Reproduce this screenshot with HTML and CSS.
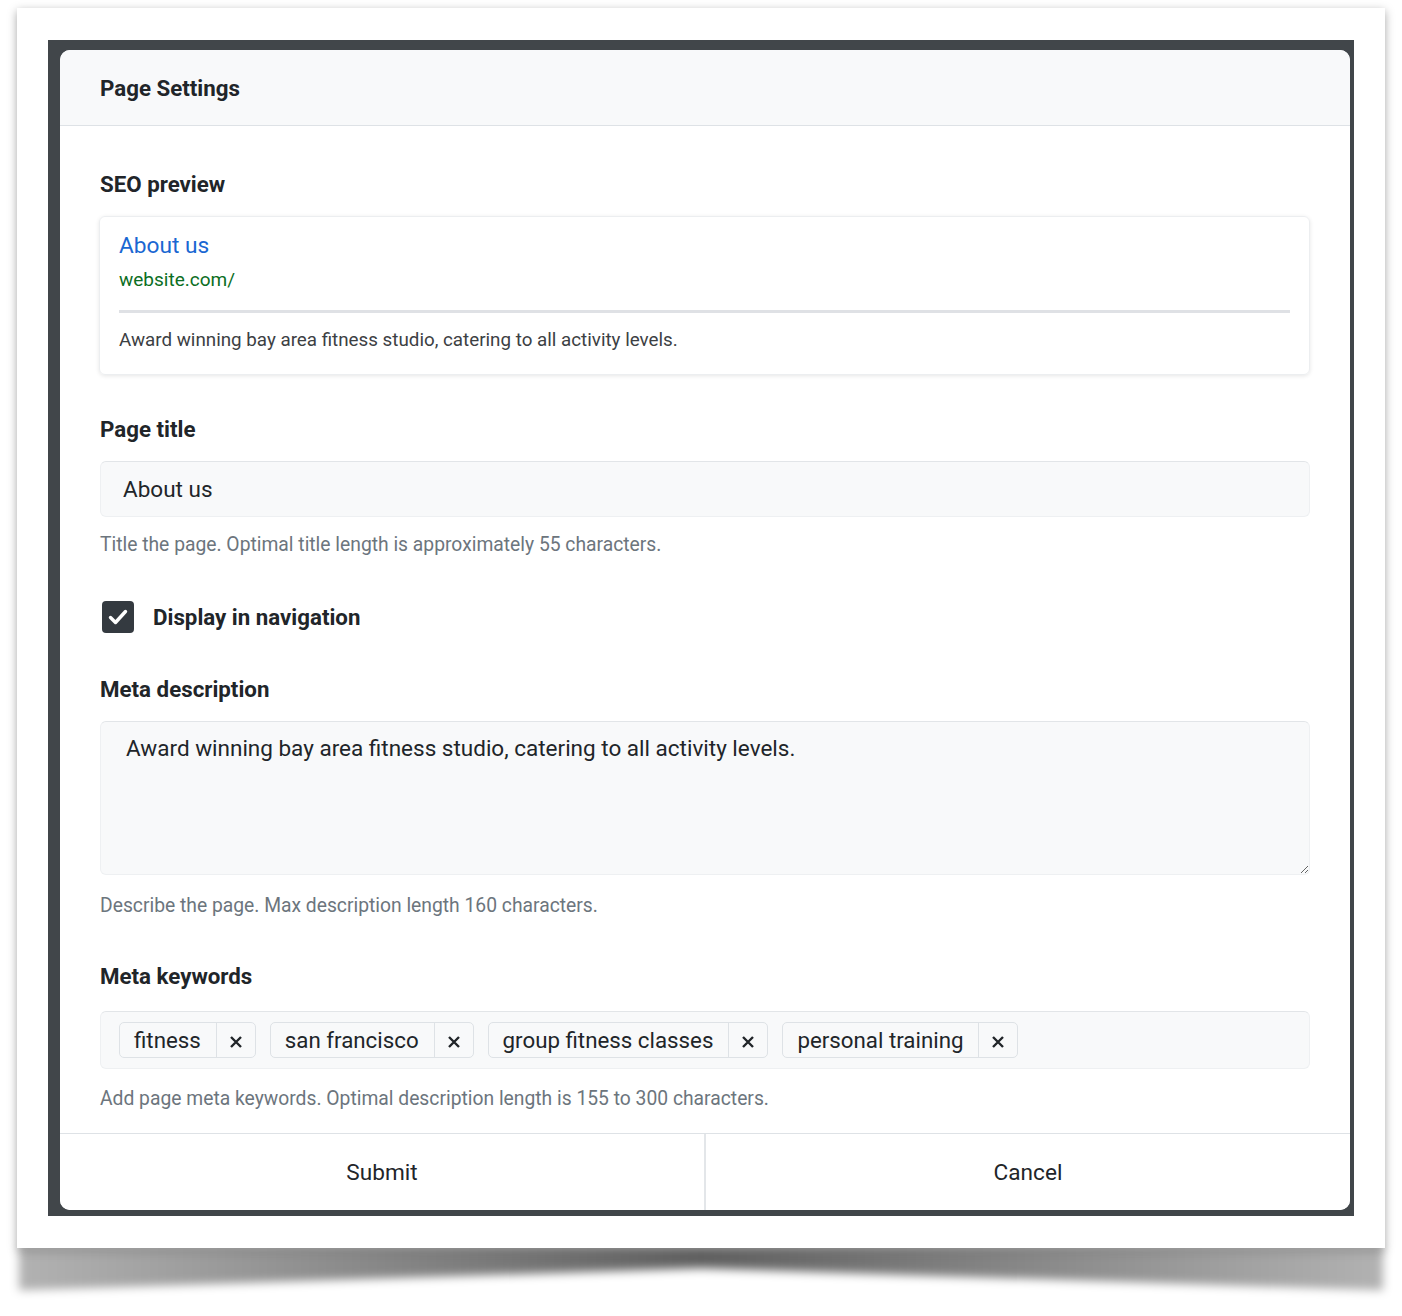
FILE: index.html
```html
<!DOCTYPE html>
<html lang="en">
  <head>
    <meta charset="UTF-8" />
    <meta name="viewport" content="width=device-width, initial-scale=1.0" />
    <title>Page Settings</title>
    <link rel="stylesheet" href="styles.css">
  </head>
  <body>
    <div class="frame">
      <div class="backdrop">
        <div class="modal">
          <div class="modal-header">
            <h1>Page Settings</h1>
          </div>

          <div class="modal-body">
            <h2 class="field-label">SEO preview</h2>
            <div class="seo-card">
              <div class="seo-title">About us</div>
              <div class="seo-url">website.com/</div>
              <div class="seo-divider"></div>
              <p class="seo-desc">Award winning bay area fitness studio, catering to all activity levels.</p>
            </div>

            <label class="field-label label-title" for="pageTitle">Page title</label>
            <input class="text-input" type="text" id="pageTitle" value="About us" />
            <p class="help">Title the page. Optimal title length is approximately 55 characters.</p>

            <div class="check-row">
              <span class="checkbox">
                <svg width="24" height="24" viewBox="0 0 24 24">
                  <path d="M4.5 12.5 L9.5 17.5 L19.5 6.5" fill="none" stroke="#fff" stroke-width="3.4" stroke-linecap="round" stroke-linejoin="round" />
                </svg>
              </span>
              <span class="check-label">Display in navigation</span>
            </div>

            <label class="field-label label-desc" for="metaDesc">Meta description</label>
            <textarea class="text-area" id="metaDesc">Award winning bay area fitness studio, catering to all activity levels.</textarea>
            <p class="help help-desc">Describe the page. Max description length 160 characters.</p>

            <label class="field-label label-keys">Meta keywords</label>
            <div class="tag-input">
              <span class="tag"><span class="tag-text">fitness</span><span class="tag-remove"><svg width="14" height="14" viewBox="0 0 14 14"><path d="M2 2 L12 12 M12 2 L2 12" stroke="#212529" stroke-width="2.4" /></svg></span></span>
              <span class="tag"><span class="tag-text">san francisco</span><span class="tag-remove"><svg width="14" height="14" viewBox="0 0 14 14"><path d="M2 2 L12 12 M12 2 L2 12" stroke="#212529" stroke-width="2.4" /></svg></span></span>
              <span class="tag"><span class="tag-text">group fitness classes</span><span class="tag-remove"><svg width="14" height="14" viewBox="0 0 14 14"><path d="M2 2 L12 12 M12 2 L2 12" stroke="#212529" stroke-width="2.4" /></svg></span></span>
              <span class="tag"><span class="tag-text">personal training</span><span class="tag-remove"><svg width="14" height="14" viewBox="0 0 14 14"><path d="M2 2 L12 12 M12 2 L2 12" stroke="#212529" stroke-width="2.4" /></svg></span></span>
            </div>
            <p class="help help-keys">Add page meta keywords. Optimal description length is 155 to 300 characters.</p>
          </div>

          <div class="modal-footer">
            <button class="footer-btn" type="button">Submit</button>
            <button class="footer-btn" type="button">Cancel</button>
          </div>
        </div>
      </div>
    </div>
    <!-- curled drop shadow under the screenshot frame -->
    <div class="frame-shadow"><div class="frame-shadow-shape"></div></div>
  </body>
</html>
```

FILE: styles.css
```css
* {
  margin: 0;
  padding: 0;
  box-sizing: border-box;
  font-family: Roboto, "Liberation Sans", sans-serif;
}

body {
  background: #fff;
  padding: 8px 17px;
}

/* Screenshot frame */
.frame {
  position: relative;
  z-index: 1;
  width: 1368px;
  padding: 32px 31px;
  background: #fff;
  box-shadow: 0 3px 9px rgba(0, 0, 0, 0.35);
}

.frame-shadow {
  width: 1364px;
  height: 48px;
  margin-left: 2px;
  filter: blur(5px);
}

.frame-shadow-shape {
  width: 100%;
  height: 100%;
  background: linear-gradient(to right, rgba(0, 0, 0, 0.3), rgba(0, 0, 0, 0.62) 50%, rgba(0, 0, 0, 0.3));
  clip-path: polygon(0 0, 100% 0, 100% 88%, 50% 42%, 0 88%);
}

.backdrop {
  background: #41464a;
  padding: 10px 4px 6px 12px;
}

/* Modal */
.modal {
  background: #fff;
  border-radius: 10px;
  overflow: hidden;
  height: 1160px;
  display: flex;
  flex-direction: column;
}

.modal-header {
  background: #f8f9fa;
  height: 76px;
  border-bottom: 1px solid #dee2e6;
  padding: 0 40px;
  display: flex;
  align-items: center;
}

.modal-header h1 {
  font-size: 22.3px;
  line-height: 25px;
  margin-top: 2px;
  font-weight: 700;
  color: #212529;
}

.modal-body {
  flex: 1;
  padding: 46px 40px 0;
  display: flex;
  flex-direction: column;
}

.field-label {
  display: block;
  font-size: 22.3px;
  line-height: 25px;
  font-weight: 700;
  color: #212529;
  margin-bottom: 19px;
}

.label-title {
  margin-top: 42px;
}

.label-desc {
  margin-top: 44px;
}

.label-keys {
  margin-top: 47px;
  margin-bottom: 22px;
}

/* SEO preview card */
.seo-card {
  border: 1px solid #eceef0;
  border-radius: 6px;
  box-shadow: 0 1px 4px rgba(0, 0, 0, 0.1);
  margin-left: -1px;
  padding: 14px 19px 22px;
}

.seo-title {
  font-size: 22.7px;
  line-height: 29px;
  color: #1a67d2;
}

.seo-url {
  font-size: 19px;
  line-height: 23px;
  color: #0b6e23;
  margin-top: 8px;
}

.seo-divider {
  height: 3px;
  background: #dfe1e5;
  margin-top: 19px;
}

.seo-desc {
  font-size: 18.8px;
  line-height: 23px;
  color: #3c4043;
  margin-top: 16px;
}

/* Inputs */
.text-input,
.text-area,
.tag-input {
  width: 100%;
  background: #f8f9fa;
  border: 1px solid #eef0f2;
  border-top-color: #e2e5e8;
  border-radius: 6px;
  outline: none;
  color: #212529;
}

.text-input {
  height: 56px;
  padding: 0 22px;
  font-size: 22.5px;
}

.text-area {
  height: 154px;
  padding: 12px 25px;
  font-size: 22.5px;
  line-height: 29px;
  resize: vertical;
}

.help {
  font-size: 19.3px;
  line-height: 23px;
  color: #6c757d;
  margin-top: 16px;
}

.help-desc {
  margin-top: 19px;
}

.help-keys {
  margin-top: 18px;
}

/* Checkbox */
.check-row {
  display: flex;
  align-items: center;
  gap: 19px;
  margin-top: 45px;
  padding-left: 2px;
}

.checkbox {
  width: 32px;
  height: 32px;
  border-radius: 4px;
  background: #343a40;
  display: flex;
  align-items: center;
  justify-content: center;
}

.check-label {
  font-size: 22.3px;
  line-height: 25px;
  font-weight: 700;
  color: #212529;
}

/* Keywords */
.tag-input {
  height: 58px;
  padding: 0 18px;
  display: flex;
  align-items: center;
  gap: 14px;
}

.tag {
  display: flex;
  height: 36px;
  border: 1px solid #dee2e6;
  border-radius: 5px;
  background: #f8f9fa;
}

.tag-text {
  font-size: 22.3px;
  line-height: 34px;
  padding: 0 15px 0 14px;
  color: #212529;
}

.tag-remove {
  width: 39px;
  border-left: 1px solid #dee2e6;
  display: flex;
  align-items: center;
  justify-content: center;
  padding-top: 4px;
}

/* Footer */
.modal-footer {
  height: 77px;
  border-top: 1px solid #dee2e6;
  display: flex;
}

.footer-btn {
  flex: 1;
  background: #fff;
  border: none;
  font-size: 22.6px;
  color: #212529;
  cursor: pointer;
}

.footer-btn:first-child {
  border-right: 2px solid #e3e6e9;
}
```
